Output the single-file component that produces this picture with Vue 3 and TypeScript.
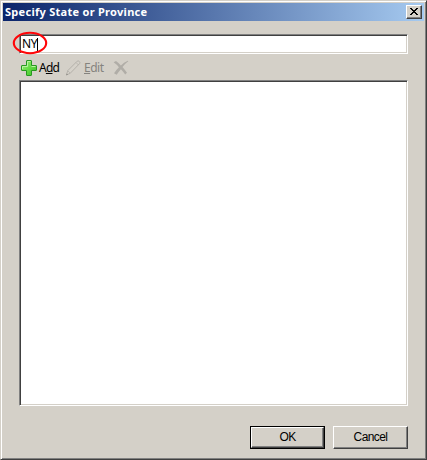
<script setup lang="ts">
import { ref } from 'vue'

const province = ref<string>('NY')
</script>

<template>
  <main class="dialog">
    <header class="titlebar">
      <h1>Specify State or Province</h1>
      <button class="close" aria-label="Close">
        <svg width="8" height="7" viewBox="0 0 8 7" shape-rendering="crispEdges">
          <path d="M0 0h2v1h1v1h2V1h1V0h2v1H7v1H6v1H5v1h1v1h1v1h1v1H6V6H5V5H3v1H2v1H0V6h1V5h1V4h1V3H2V2H1V1H0z" fill="#000" />
        </svg>
      </button>
    </header>
    <div class="content">
      <div class="field">
        <span>{{ province }}</span><i class="caret"></i>
        <svg class="ring" width="36" height="24" viewBox="0 0 36 24">
          <ellipse cx="18" cy="12" rx="16.2" ry="10.2" fill="none" stroke="#ff0508" stroke-width="2.100" />
        </svg>
      </div>
      <div class="toolbar">
        <button class="tool add">
          <svg width="18" height="18" viewBox="0 0 18 18">
            <defs>
              <linearGradient id="green" x1="0" y1="0" x2="1" y2="1">
                <stop offset="0" stop-color="#a5ef87" />
                <stop offset="0.5" stop-color="#65dc45" />
                <stop offset="1" stop-color="#37bb27" />
              </linearGradient>
            </defs>
            <path d="M7 1.500h4q.5 0 .5.5v4.500H16q.5 0 .5.5v4q0 .5-.5.5h-4.500V16q0 .5-.5.5H7q-.5 0-.5-.5v-4.500H2q-.5 0-.5-.5V7q0-.5.5-.5h4.500V2q0-.5.5-.5z" fill="url(#green)" stroke="#269820" />
            <path d="M7.500 7.500V2.500h3M2.500 10V7.500h5M11.500 7.500h4" fill="none" stroke="#b9f3a3" />
          </svg>
          <span>A<u>d</u>d</span>
        </button>
        <button class="tool edit" disabled>
          <svg width="17" height="18" viewBox="0 0 17 18">
            <path d="M1.500 16l1.200-4.300L12.200 2.200q1-.8 2.100.3t.3 2.100L5.300 14.200z" fill="#d6d2ca" stroke="#b0ada6" stroke-width=".9" />
            <path d="M2.800 11.800l2.400 2.300M11 3.500l2.500 2.500" fill="none" stroke="#b3b0a9" stroke-width=".8" />
            <path d="M1.200 16.300l.5-1.900 1.400 1.400z" fill="#8d8b86" />
          </svg>
          <span><u>E</u>dit</span>
        </button>
        <button class="tool delete" disabled aria-label="Delete">
          <svg width="16" height="16" viewBox="0 0 16 16">
            <path d="M.6 2.300L3 .9q2.800 2 4.900 4.500Q10.700 2.300 14.800.7l.5.600q-3.600 2.600-5.800 5.800 2.300 2.700 4.500 5.700l-1.800 1.700q-2-2.800-4.300-5.200-2.200 2.500-4.200 5.400L1 13.200q2.200-3.300 4.900-6Q3.700 4.500.6 2.300z" fill="#b0ada7" />
          </svg>
        </button>
      </div>
      <div class="list"></div>
      <footer class="actions">
        <div class="default"><button class="push">OK</button></div>
        <button class="push cancel">Cancel</button>
      </footer>
    </div>
  </main>
</template>

<style>
body { margin: 0; background: #d4d0c8; }
</style>

<style scoped>
* { box-sizing: border-box; }
button { appearance: none; margin: 0; padding: 0; border: 0; border-radius: 0; background: none; color: #000; }
.dialog {
  width: 427px; height: 460px; padding: 1px; background: #d4d0c8;
  border: 1px solid; border-color: #d4d0c8 #404040 #404040 #d4d0c8;
  box-shadow: inset 1px 1px #fff, inset -1px -1px #808080;
}
.titlebar {
  display: flex; align-items: center; justify-content: space-between;
  height: 18px; margin: 1px 1px 0; padding: 0 2px;
  background: linear-gradient(90deg, #0a246a, #a6caf0);
}
h1 { margin: 0; font: bold 11px/18px "Noto Sans", sans-serif; letter-spacing: .28px; color: #fff; white-space: nowrap; }
.close {
  width: 16px; height: 14px; padding: 0 1px 1px 0; display: flex; align-items: center; justify-content: center;
  background: #d4d0c8; border: 1px solid; border-color: #fff #404040 #404040 #fff;
  box-shadow: inset -1px -1px #808080;
}
.content { padding: 13px 17px 0; }
.field {
  position: relative; display: flex; align-items: center; height: 20px; padding-left: 2px;
  background: #fff; border: 1px solid; border-color: #808080 #fff #fff #808080;
  box-shadow: inset 1px 1px #404040, inset -1px -1px #d4d0c8;
  font: 12px/18px "Noto Sans", sans-serif; letter-spacing: -.3px;
}
.field span { width: 15px; }
.caret { width: 1px; height: 13px; background: #000; }
.ring { position: absolute; left: -8px; top: -4px; }
.toolbar { display: flex; align-items: center; height: 26px; padding: 2px 0 0 1px; }
.tool { display: flex; align-items: center; font: 12px/18px "Noto Sans", sans-serif; letter-spacing: -.8px; }
.add svg { margin-right: 1px; }
.add span { width: 20px; text-align: left; }
.edit { margin-left: 6px; color: #85837e; }
.edit svg { margin-right: 2px; }
.edit span { width: 20px; text-align: left; letter-spacing: -.5px; }
.delete { margin-left: 9px; }
u { text-decoration-thickness: 1px; text-underline-offset: 1px; }
.list {
  height: 326px; background: #fff; border: 1px solid; border-color: #808080 #fff #fff #808080;
  box-shadow: inset 1px 1px #404040, inset -1px -1px #d4d0c8;
}
.actions { display: flex; justify-content: flex-end; gap: 8px; padding-top: 20px; }
.default { width: 75px; height: 23px; padding: 1px; background: #000; }
.push {
  width: 75px; height: 23px; padding-bottom: 2px; background: #d4d0c8; border: 1px solid;
  border-color: #fff #404040 #404040 #fff; box-shadow: inset -1px -1px #808080;
  font: 12px/18px "Liberation Sans", sans-serif; letter-spacing: -.6px;
}
.default .push { display: block; width: 73px; height: 21px; }
</style>
